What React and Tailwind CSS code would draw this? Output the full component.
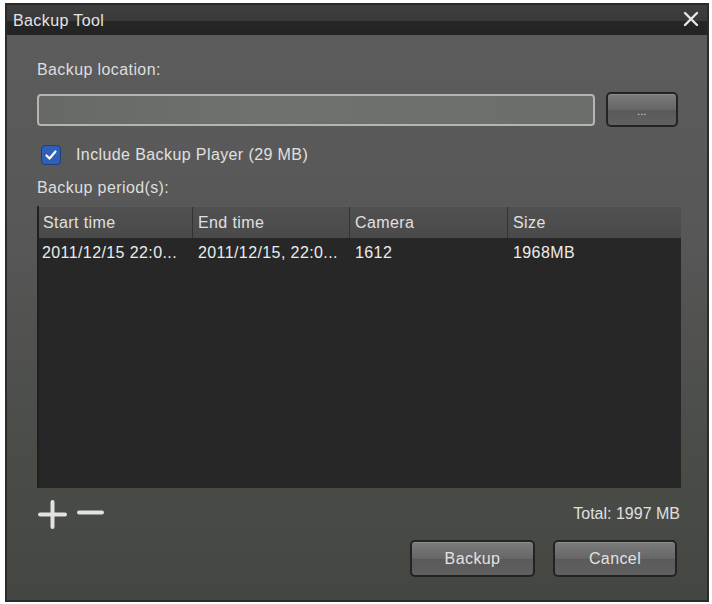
import React from 'react';

const rows = [
  { start: '2011/12/15 22:0...', end: '2011/12/15, 22:0...', camera: '1612', size: '1968MB' },
];

function GrayButton({ children, className = '' }) {
  return (
    <button
      type="button"
      className={`rounded-[5px] border-2 border-[#232323] bg-[linear-gradient(#7c7c7c,#666_50%,#5a5a5a_52%,#606060)] shadow-[inset_0_1px_0_#8e8e8e] text-[#e2e2e2] ${className}`}
    >
      {children}
    </button>
  );
}

export default function App() {
  return (
    <div className="w-[712px] h-[604px] bg-white pt-[3px] pl-[5px] font-['Liberation_Sans',Arial,sans-serif] tracking-[0.4px]">
      <div className="w-[704px] h-[599px] border-2 border-[#2b2b2b] flex flex-col bg-[linear-gradient(#5d5d5d,#565756_40%,#4a4c48_75%,#444741)]">
        {/* title bar */}
        <div className="h-[30px] shrink-0 flex items-center justify-between pl-[6px] pr-[8px] bg-[linear-gradient(#3f3f3f,#393939_52%,#262626_54%,#232323)]">
          <span className="text-[16px] text-[#e4e4e4] leading-none mt-[1px]">Backup Tool</span>
          <svg width="16" height="16" viewBox="0 0 16 16" className="mt-[-2px]">
            <path d="M2 2 L14 14 M14 2 L2 14" stroke="#e8e8e8" strokeWidth="2.4" strokeLinecap="round" />
          </svg>
        </div>

        <div className="flex-1 flex flex-col pl-[30px] pr-[26px] pt-[26px]">
          <div className="text-[16px] leading-[18px] text-[#dedede]">Backup location:</div>

          <div className="mt-[13px] flex items-center gap-[11px]">
            <div className="flex-1 h-[32px] rounded-[4px] border-2 border-[#b3b5b0] bg-[linear-gradient(90deg,#666965,#6e716c_40%,#6b6e69)]" />
            <GrayButton className="w-[72px] h-[35px] mr-[3px] flex items-end justify-center pb-[8px] text-[10px] leading-none">
              ...
            </GrayButton>
          </div>

          <div className="mt-[16px] flex items-center ml-[4px]">
            <div className="w-[20px] h-[20px] rounded-[4px] bg-[#2f5fb8] border border-[#1c3f80] flex items-center justify-center">
              <svg width="14" height="14" viewBox="0 0 14 14">
                <path d="M2.5 7.5 L5.5 10.5 L11.5 3.5" fill="none" stroke="#ffffff" strokeWidth="2.2" strokeLinecap="round" strokeLinejoin="round" />
              </svg>
            </div>
            <span className="ml-[15px] text-[16px] text-[#e0e0e0]">Include Backup Player (29 MB)</span>
          </div>

          <div className="mt-[12px] text-[16px] leading-[18px] text-[#dedede]">Backup period(s):</div>

          <div className="mt-[9px] h-[282px] bg-[#272727] border-l-2 border-[#1f1f1f] flex flex-col">
            <div className="h-[32px] shrink-0 grid grid-cols-[154px_157px_158px_1fr] bg-[linear-gradient(#505050,#4a4a4a)] border-t border-[#5a5a5a] text-[16px] text-[#e0e0e0]">
              <div className="flex items-center pl-[4px] border-r border-[#333]">Start time</div>
              <div className="flex items-center pl-[5px] border-r border-[#333]">End time</div>
              <div className="flex items-center pl-[5px] border-r border-[#333]">Camera</div>
              <div className="flex items-center pl-[5px]">Size</div>
            </div>
            {rows.map((r) => (
              <div key={r.camera} className="h-[30px] grid grid-cols-[154px_157px_158px_1fr] text-[16px] text-[#ececec]">
                <div className="flex items-center pl-[3px]">{r.start}</div>
                <div className="flex items-center pl-[5px]">{r.end}</div>
                <div className="flex items-center pl-[5px]">{r.camera}</div>
                <div className="flex items-center pl-[5px]">{r.size}</div>
              </div>
            ))}
          </div>

          <div className="mt-[14px] flex items-center justify-between h-[24px]">
            <div className="flex items-center gap-[10px] ml-[1px]">
              <svg width="29" height="29" viewBox="0 0 29 29">
                <path d="M14.5 2 V27 M2 14.5 H27" stroke="#e2e2e2" strokeWidth="4" strokeLinecap="round" />
              </svg>
              <svg width="27" height="29" viewBox="0 0 27 29">
                <path d="M2 12.5 H25" stroke="#e2e2e2" strokeWidth="4" strokeLinecap="round" />
              </svg>
            </div>
            <span className="text-[16px] text-[#e0e0e0] mr-[1px] tracking-[0px]">Total: 1997 MB</span>
          </div>

          <div className="mt-[14px] flex justify-end gap-[18px] mr-[4px]">
            <GrayButton className="w-[125px] h-[37px] text-[16px]">Backup</GrayButton>
            <GrayButton className="w-[124px] h-[37px] text-[16px]">Cancel</GrayButton>
          </div>
        </div>
      </div>
    </div>
  );
}
